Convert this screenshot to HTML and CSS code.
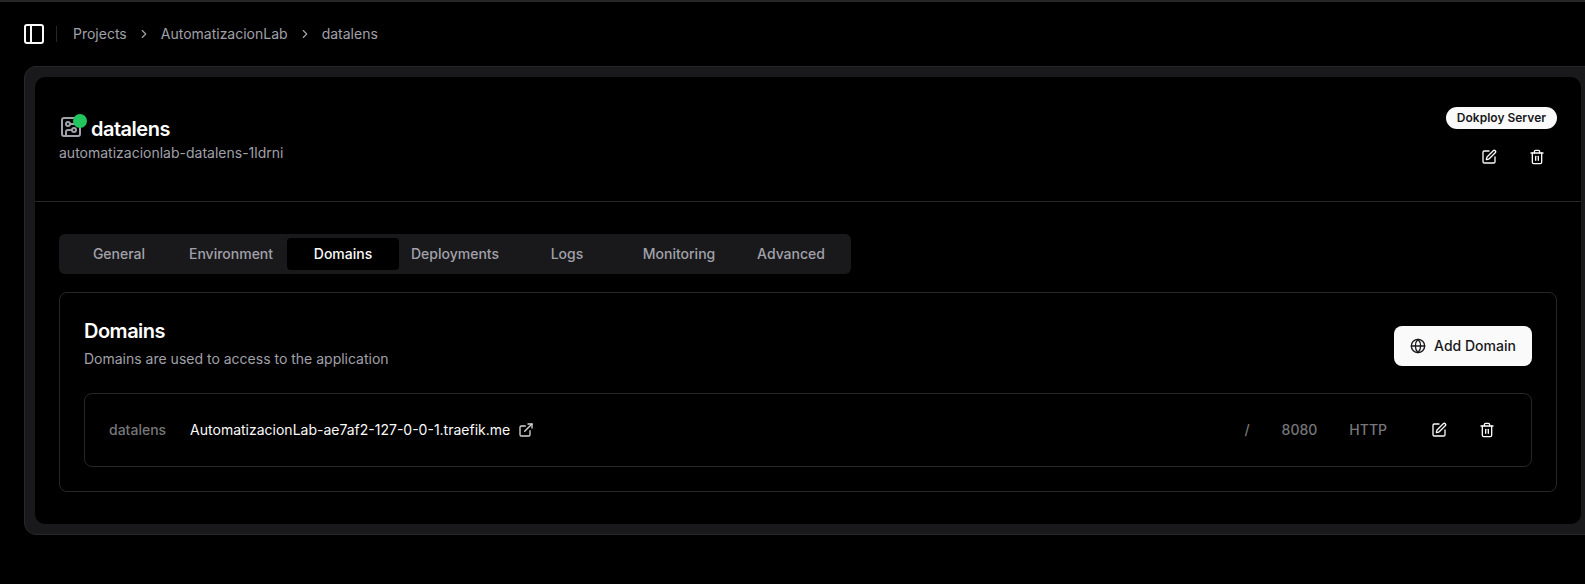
FILE: index.html
```html
<!DOCTYPE html>
<html lang="en">
<head>
<meta charset="utf-8">
<title>datalens</title>
<link rel="stylesheet" href="styles.css">
</head>
<body>
<div class="app">
  <header class="topbar">
    <svg class="sidebar-icon" viewBox="0 0 24 24" fill="none" stroke="currentColor" stroke-width="2" stroke-linecap="round" stroke-linejoin="round"><rect x="3" y="3" width="18" height="18" rx="2"/><path d="M9 3v18"/></svg>
    <span class="vsep"></span>
    <nav class="crumbs">
      <span>Projects</span>
      <svg class="chev" viewBox="0 0 24 24" fill="none" stroke="currentColor" stroke-width="2" stroke-linecap="round" stroke-linejoin="round"><path d="m9 18 6-6-6-6"/></svg>
      <span>AutomatizacionLab</span>
      <svg class="chev" viewBox="0 0 24 24" fill="none" stroke="currentColor" stroke-width="2" stroke-linecap="round" stroke-linejoin="round"><path d="m9 18 6-6-6-6"/></svg>
      <span>datalens</span>
    </nav>
  </header>
  <main class="shell">
    <div class="panel">
      <section class="head">
        <div class="head-main">
          <div class="title-row">
            <span class="svc-icon">
              <svg viewBox="0 0 24 24" fill="none" stroke="currentColor" stroke-width="2" stroke-linecap="round" stroke-linejoin="round"><rect x="3" y="3" width="18" height="18" rx="2"/><path d="M11 9h4a2 2 0 0 0 2-2V3"/><circle cx="9" cy="9" r="2"/><path d="M7 21v-4a2 2 0 0 1 2-2h4"/><circle cx="15" cy="15" r="2"/></svg>
              <span class="dot"></span>
            </span>
            <h1>datalens</h1>
          </div>
          <p class="appname">automatizacionlab-datalens-1ldrni</p>
        </div>
        <div class="head-side">
          <span class="badge">Dokploy Server</span>
          <div class="head-actions">
            <svg class="ico" viewBox="0 0 24 24" fill="none" stroke="currentColor" stroke-width="2" stroke-linecap="round" stroke-linejoin="round"><path d="M12 3H5a2 2 0 0 0-2 2v14a2 2 0 0 0 2 2h14a2 2 0 0 0 2-2v-7"/><path d="M18.375 2.625a1 1 0 0 1 3 3l-9.013 9.014a2 2 0 0 1-.853.505l-2.873.84a.5.5 0 0 1-.62-.62l.84-2.873a2 2 0 0 1 .506-.852z"/></svg>
            <svg class="ico" viewBox="0 0 24 24" fill="none" stroke="currentColor" stroke-width="2" stroke-linecap="round" stroke-linejoin="round"><path d="M3 6h18"/><path d="M19 6v14a2 2 0 0 1-2 2H7a2 2 0 0 1-2-2V6"/><path d="M8 6V4a2 2 0 0 1 2-2h4a2 2 0 0 1 2 2v2"/><path d="M10 11v6"/><path d="M14 11v6"/></svg>
          </div>
        </div>
      </section>
      <section class="body">
        <div class="tabs">
          <span class="tab">General</span>
          <span class="tab">Environment</span>
          <span class="tab active">Domains</span>
          <span class="tab">Deployments</span>
          <span class="tab">Logs</span>
          <span class="tab">Monitoring</span>
          <span class="tab">Advanced</span>
        </div>
        <div class="card">
          <div class="card-top">
            <div>
              <h2>Domains</h2>
              <p class="desc">Domains are used to access to the application</p>
            </div>
            <button class="add">
              <svg viewBox="0 0 24 24" fill="none" stroke="currentColor" stroke-width="2" stroke-linecap="round" stroke-linejoin="round"><circle cx="12" cy="12" r="10"/><path d="M12 2a14.5 14.5 0 0 0 0 20 14.5 14.5 0 0 0 0-20"/><path d="M2 12h20"/></svg>
              <span class="add-label">Add Domain</span>
            </button>
          </div>
          <div class="row">
            <span class="muted">datalens</span>
            <span class="host">AutomatizacionLab-ae7af2-127-0-0-1.traefik.me</span>
            <svg class="ext" viewBox="0 0 24 24" fill="none" stroke="currentColor" stroke-width="2" stroke-linecap="round" stroke-linejoin="round"><path d="M15 3h6v6"/><path d="M10 14 21 3"/><path d="M18 13v6a2 2 0 0 1-2 2H5a2 2 0 0 1-2-2V8a2 2 0 0 1 2-2h6"/></svg>
            <div class="row-side">
              <span class="muted">/</span>
              <span class="muted port">8080</span>
              <span class="muted proto">HTTP</span>
              <svg class="ico edit" viewBox="0 0 24 24" fill="none" stroke="currentColor" stroke-width="2" stroke-linecap="round" stroke-linejoin="round"><path d="M12 3H5a2 2 0 0 0-2 2v14a2 2 0 0 0 2 2h14a2 2 0 0 0 2-2v-7"/><path d="M18.375 2.625a1 1 0 0 1 3 3l-9.013 9.014a2 2 0 0 1-.853.505l-2.873.84a.5.5 0 0 1-.62-.62l.84-2.873a2 2 0 0 1 .506-.852z"/></svg>
              <svg class="ico" viewBox="0 0 24 24" fill="none" stroke="currentColor" stroke-width="2" stroke-linecap="round" stroke-linejoin="round"><path d="M3 6h18"/><path d="M19 6v14a2 2 0 0 1-2 2H7a2 2 0 0 1-2-2V6"/><path d="M10 11v6"/><path d="M14 11v6"/><path d="M8 6V4a2 2 0 0 1 2-2h4a2 2 0 0 1 2 2v2"/></svg>
            </div>
          </div>
        </div>
      </section>
    </div>
  </main>
</div>
</body>
</html>
```

FILE: styles.css
```css
* { box-sizing: border-box; }
html, body { margin: 0; height: 100%; background: #000; overflow: hidden; }
body { font-family: Inter, "Liberation Sans", sans-serif; font-size: 14px; color: #fafafa; }
h1, h2, p { margin: 0; }

.app { height: 584px; border-top: 2px solid #27272a; overflow: hidden; }

.topbar { height: 64px; padding-left: 24px; display: flex; align-items: center; }
.sidebar-icon { width: 24px; height: 24px; color: #fafafa; margin-left: -2px; margin-right: 10px; }
.vsep { width: 1px; height: 16px; background: #27272a; margin-right: 16px; }
.crumbs { display: flex; align-items: center; gap: 10px; color: #a1a1aa; line-height: 20px; }
.chev { width: 14px; height: 14px; margin: 0; }

.shell { margin-left: 24px; margin-right: -12px; height: 469px; background: #19191b; border: 1px solid #27272a; border-radius: 12px; padding: 10px; }
.panel { width: 1546px; height: 447px; background: #000; border-radius: 10px; }

.head { height: 125px; padding: 30px 24px 0; border-bottom: 1px solid #27272a; display: flex; justify-content: space-between; }
.head-main { padding-top: 5px; }
.title-row { display: flex; align-items: center; gap: 8px; height: 30px; }
.svc-icon { position: relative; width: 24px; height: 24px; color: #a1a1aa; }
.svc-icon svg { width: 24px; height: 24px; display: block; }
.dot { position: absolute; top: -1px; right: -4px; width: 14px; height: 14px; border-radius: 50%; background: #22c55e; }
h1 { font-size: 20px; line-height: 28px; font-weight: 600; letter-spacing: -0.5px; color: #fff; margin-top: 4px; }
.appname { color: #a1a1aa; line-height: 20px; margin-top: 1px; }

.head-side { display: flex; flex-direction: column; align-items: flex-end; }
.badge { background: #fafafa; color: #18181b; font-size: 12px; font-weight: 600; line-height: 16px; padding: 3px 11px; border-radius: 999px; height: 22px; }
.head-actions { display: flex; gap: 32px; margin-top: 20px; margin-right: 12px; }
.ico { width: 16px; height: 16px; color: #fafafa; display: block; }

.body { padding: 32px 24px 0; }
.tabs { width: 792px; height: 40px; background: #19191b; border-radius: 6px; padding: 4px; display: flex; }
.tab { width: 112px; padding-bottom: 1px; display: flex; align-items: center; justify-content: center; color: #a1a1aa; font-weight: 500; border-radius: 4px; }
.tab.active { background: #000; color: #fafafa; }

.card { margin-top: 18px; height: 200px; border: 1px solid #27272a; border-radius: 8px; padding: 24px 24px 0; }
.card-top { display: flex; justify-content: space-between; align-items: flex-start; }
h2 { font-size: 20px; line-height: 28px; font-weight: 600; letter-spacing: -0.5px; color: #fff; }
.desc { color: #a1a1aa; line-height: 20px; margin-top: 4px; }
.add { margin-top: 9px; width: 138px; height: 40px; border: 0; border-radius: 8px; background: #fafafa; color: #18181b; font: 500 14px Inter, "Liberation Sans", sans-serif; display: flex; align-items: center; justify-content: center; gap: 8px; padding: 0; }
.add svg { width: 16px; height: 16px; }
.add-label { margin-top: -1px; }

.row { margin-top: 24px; height: 74px; border: 1px solid #27272a; border-radius: 8px; padding: 0 36px 0 24px; display: flex; align-items: center; }
.muted { color: #777779; font-weight: 500; padding-bottom: 2px; }
.host { color: #fafafa; margin-left: 24px; padding-bottom: 2px; }
.ext { width: 16px; height: 16px; color: #d4d4d8; margin-left: 8px; }
.row-side { margin-left: auto; display: flex; align-items: center; }
.port { margin-left: 32px; }
.proto { margin-left: 32px; }
.edit { margin-left: 44px; margin-right: 32px; }
```
